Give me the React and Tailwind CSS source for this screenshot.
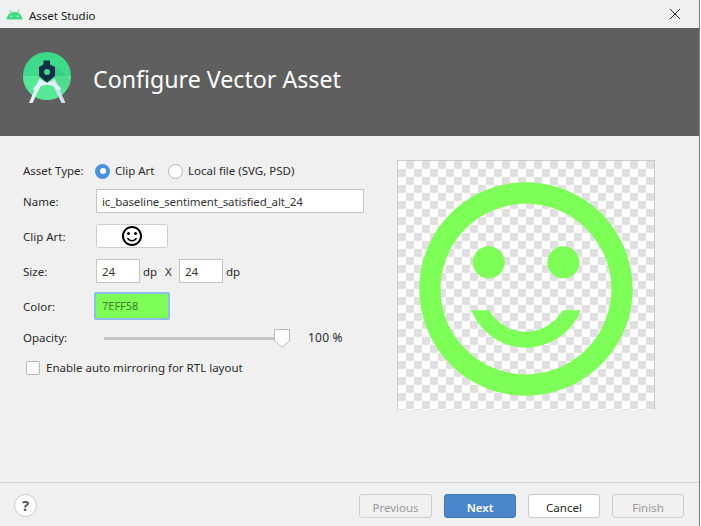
const SMILE_RING =
  "M11.99 2C6.47 2 2 6.48 2 12s4.47 10 9.99 10C17.52 22 22 17.52 22 12S17.52 2 11.99 2zM12 20c-4.42 0-8-3.58-8-8s3.58-8 8-8 8 3.58 8 8-3.58 8-8 8z";
const SMILE_MOUTH =
  "M12 16c-1.48 0-2.75-.81-3.45-2H6.88c.8 2.05 2.79 3.5 5.12 3.5s4.32-1.45 5.12-3.5h-1.67c-.7 1.19-1.97 2-3.45 2z";

const Smile = ({ className, fill }) => (
  <svg viewBox="0 0 24 24" className={className} fill={fill}>
    <path d={SMILE_RING} />
    <circle cx="15.5" cy="9.5" r="1.5" />
    <circle cx="8.5" cy="9.5" r="1.5" />
    <path d={SMILE_MOUTH} />
  </svg>
);

const AndroidHead = () => (
  <svg viewBox="0 0 17 11" className="w-[17px] h-[11px] shrink-0">
    <path d="M0.5 10.5C0.8 6.2 4 3 8.5 3s7.7 3.2 8 7.5z" fill="#3ddc84" />
    <path d="M4 1l1.8 3M13 1l-1.8 3" stroke="#3ddc84" strokeWidth="1" />
    <circle cx="5.2" cy="7.2" r="0.8" fill="#f0f0f0" />
    <circle cx="11.8" cy="7.2" r="0.8" fill="#f0f0f0" />
  </svg>
);

const StudioLogo = () => (
  <svg viewBox="0 0 48 52" className="w-12 h-[52px] shrink-0">
    <circle cx="24" cy="24" r="24" fill="#3fd98a" />
    <path d="M0 24a24 24 0 0 0 48 0z" fill="#56e894" />
    <path d="M30 12L48 28A24 24 0 0 1 44 38L30 30z" fill="#000" opacity="0.06" />
    <path d="M6 51L9.500 51L20 29L16.500 26z" fill="#e3f1fb" />
    <path d="M42.500 51L38.500 51L28 29L31.500 26z" fill="#cfe2f0" />
    <path d="M11.500 38C14.500 33 18.500 31 24 31s9.500 2 12.500 7" stroke="#e3f1fb" strokeWidth="3.500" fill="none" />
    <path d="M20.500 8.500h6.500V12.500l5 2.500V24l-8 6.800L16 24v-9l4.500-2.500z" fill="#10304a" />
    <circle cx="24" cy="20" r="3" fill="#3fd98a" />
  </svg>
);

const FieldLabel = ({ children, className = "pt-[2px]" }) => (
  <span className={`w-[73px] shrink-0 text-[11.5px] text-[#2b2b2b] ${className}`}>{children}</span>
);

const TextBox = ({ value, className }) => (
  <div
    className={`h-6 flex items-center pl-[5px] pt-[2px] bg-white border border-[#c4c4c4] text-[11.5px] text-[#333] ${className}`}
  >
    {value}
  </div>
);

const FooterButton = ({ label, kind, className = "w-[72px]" }) => {
  const styles = {
    disabled: "bg-[#f0f0f0] border-[#cfcfcf] text-[#9a9a9a]",
    primary: "bg-[#4a86c8] border-[#3f78b8] text-white font-semibold",
    normal: "bg-white border-[#c9c9c9] text-[#1f1f1f]",
  };
  return (
    <button className={`h-6 pt-[3px] rounded-[3px] border text-[11.5px] ${styles[kind]} ${className}`}>
      {label}
    </button>
  );
};

export default function App() {
  return (
    <div className="w-[701px] h-[526px] bg-white font-['Noto_Sans','Open_Sans',sans-serif] overflow-hidden">
      <div className="w-[700px] h-full flex flex-col bg-[#f0f0f0] border-r border-[#7d7d7d]">
        {/* title bar */}
        <div className="h-7 shrink-0 flex items-center pl-1.5 pr-[19px]">
          <AndroidHead />
          <span className="ml-[6px] pt-1 text-[11.5px] text-[#1a1a1a]">Asset Studio</span>
          <svg viewBox="0 0 10 10" className="ml-auto w-[10px] h-[10px]" stroke="#222" strokeWidth="1">
            <path d="M0 0l10 10M10 0L0 10" />
          </svg>
        </div>

        {/* banner */}
        <div className="h-[108px] shrink-0 bg-[#5f5f5f] flex items-start pl-[23px] pt-6">
          <StudioLogo />
          <h1 className="ml-[22px] mt-[9px] text-[23.2px] leading-[36px] text-white">Configure Vector Asset</h1>
        </div>

        {/* body */}
        <div className="flex-1 flex items-start">
          <div className="w-[374px] shrink-0 pl-[23px] pt-6 flex flex-col">
            <div className="h-[22px] flex items-center">
              <FieldLabel className="pt-0">Asset Type:</FieldLabel>
              <span className="-ml-[1px] w-[15px] h-[15px] rounded-full bg-[#4a90e2] flex items-center justify-center">
                <span className="w-[6px] h-[6px] rounded-full bg-white" />
              </span>
              <span className="ml-[5px] w-[53px] text-[11.5px] text-[#2b2b2b]">Clip Art</span>
              <span className="w-[15px] h-[15px] rounded-full bg-white border border-[#b5b5b5]" />
              <span className="ml-[5px] text-[11.5px] text-[#2b2b2b]">Local file (SVG, PSD)</span>
            </div>

            <div className="mt-[7px] flex items-center">
              <FieldLabel>Name:</FieldLabel>
              <TextBox value="ic_baseline_sentiment_satisfied_alt_24" className="w-[268px] tracking-[-0.13px]" />
            </div>

            <div className="mt-[11px] flex items-center">
              <FieldLabel>Clip Art:</FieldLabel>
              <div className="w-[72px] h-6 bg-white border border-[#cdcdcd] rounded-[3px] flex items-center justify-center">
                <Smile className="w-6 h-6" fill="#000" />
              </div>
            </div>

            <div className="mt-[11px] flex items-center text-[11.5px] text-[#2b2b2b]">
              <FieldLabel>Size:</FieldLabel>
              <TextBox value="24" className="w-11" />
              <span className="ml-[3px] w-[15px] pt-[2px]">dp</span>
              <span className="ml-[7px] w-[14px] pt-[2px]">X</span>
              <TextBox value="24" className="w-11" />
              <span className="ml-[3px] pt-[2px]">dp</span>
            </div>

            <div className="mt-[9px] flex items-center">
              <FieldLabel>Color:</FieldLabel>
              <div className="-ml-[2px] w-[76px] h-7 border-2 border-[#8fbcf0] rounded-[2px] bg-[#7eff58] pl-[6px] flex items-center text-[11px] text-[#3f7f2c]">
                7EFF58
              </div>
            </div>

            <div className="mt-2 h-5 flex items-center">
              <FieldLabel className="pt-0">Opacity:</FieldLabel>
              <div className="relative ml-2 w-[177px] h-[3px] bg-[#c4c4c4]">
                <svg viewBox="0 0 16 19" className="absolute -right-[9px] -top-2 w-4 h-[19px]">
                  <path d="M.5.500h15v11l-7.500 7-7.500-7z" fill="#fff" stroke="#b8b8b8" />
                </svg>
              </div>
              <span className="ml-[27px] text-[12px] tracking-[0.2px] text-[#2b2b2b]">100 %</span>
            </div>

            <div className="mt-[11px] ml-[3px] flex items-center">
              <span className="w-[14px] h-[14px] bg-white border border-[#b5b5b5] rounded-[2px]" />
              <span className="ml-[6px] text-[11.5px] text-[#2b2b2b]">Enable auto mirroring for RTL layout</span>
            </div>
          </div>

          {/* preview */}
          <div className="ml-[23px] mt-6 w-[258px] h-[250px] overflow-hidden border border-b-0 border-[#cccccc] bg-[conic-gradient(#e0e0e0_25%,#fff_0_50%,#e0e0e0_0_75%,#fff_0)] bg-[length:16px_16px]">
            <Smile className="w-64 h-64" fill="#7eff58" />
          </div>
        </div>

        {/* footer */}
        <div className="h-[44px] shrink-0 border-t border-[#cfcfcf] flex items-start pt-[11px] pl-[14px] pr-[15px]">
          <button className="w-[23px] h-[23px] rounded-full bg-white border border-[#c9c9c9] text-[15px] leading-none font-bold text-[#555]">
            ?
          </button>
          <div className="ml-auto flex gap-3">
            <FooterButton label="Previous" kind="disabled" className="w-[73px]" />
            <FooterButton label="Next" kind="primary" />
            <FooterButton label="Cancel" kind="normal" />
            <FooterButton label="Finish" kind="disabled" />
          </div>
        </div>
      </div>
    </div>
  );
}
